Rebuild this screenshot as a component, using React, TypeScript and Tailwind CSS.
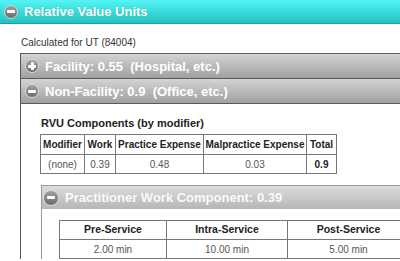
import React from "react";

function Icon({ plus = false, size = 14 }: { plus?: boolean; size?: number }) {
  return (
    <div
      className="relative shrink-0 rounded-full border border-[#d8d8d8] bg-gradient-to-b from-[#a0a0a0] to-[#6c6c6c] flex items-center justify-center"
      style={{ width: size, height: size }}
    >
      <div className="w-[8px] h-[3px] bg-white rounded-[1px]" />
      {plus && <div className="absolute w-[3px] h-[8px] bg-white rounded-[1px]" />}
    </div>
  );
}

export default function App() {
  const th2 = "h-[19px] flex items-center justify-center border-r border-b border-[#777] font-bold text-[#222] text-[10.5px]";
  const td2 = "h-[19px] flex items-center justify-center border-r border-b border-[#777] text-[#555] text-[10px]";
  return (
    <div className="w-[400px] h-[261px] overflow-hidden bg-white font-['Liberation_Sans',Arial,sans-serif]">
      <div className="w-[440px]">
        {/* Header */}
        <div className="h-[24px] flex items-center pl-[4px] bg-gradient-to-b from-[#52f4f4] to-[#22c2c2] border-b border-[#1e9e9e]">
          <Icon />
          <span className="ml-[6px] text-[13px] font-bold text-white leading-none [text-shadow:0_0_1px_rgba(0,120,120,0.4)]">
            Relative Value Units
          </span>
        </div>

        <div className="pl-[20px] pt-[13px]">
          <div className="text-[10px] leading-[12px] text-[#333] pl-[1px]">Calculated for UT (84004)</div>

          <div className="mt-[4px] border-l border-[#555]">
            {/* Facility bar */}
            <div className="h-[25px] flex items-center pl-[4px] border-t border-[#5a5a5a] bg-gradient-to-b from-[#d4d4d4] to-[#a0a0a0]">
              <Icon plus />
              <span className="ml-[6px] text-[13px] font-bold text-white leading-none whitespace-pre">
                Facility: 0.55  (Hospital, etc.)
              </span>
            </div>
            {/* Non-Facility bar */}
            <div className="h-[26px] flex items-center pl-[4px] border-t border-b border-[#5a5a5a] bg-gradient-to-b from-[#d4d4d4] to-[#a0a0a0]">
              <Icon />
              <span className="ml-[6px] text-[13px] font-bold text-white leading-none whitespace-pre">
                Non-Facility: 0.9  (Office, etc.)
              </span>
            </div>

            <div className="pl-[19px] pt-[13px]">
              <div className="text-[11px] leading-[13px] font-bold text-[#222] pl-[1px]">RVU Components (by modifier)</div>
              <table className="mt-[4px] table-fixed border-collapse w-[297px] text-[10px] text-center">
                <colgroup>
                  <col className="w-[44px]" />
                  <col className="w-[31px]" />
                  <col className="w-[88px]" />
                  <col className="w-[103px]" />
                  <col className="w-[30px]" />
                </colgroup>
                <thead>
                  <tr className="h-[20px]">
                    <th className="border border-[#777] font-bold text-[#222] p-0">Modifier</th>
                    <th className="border border-[#777] font-bold text-[#222] p-0">Work</th>
                    <th className="border border-[#777] font-bold text-[#222] p-0">Practice Expense</th>
                    <th className="border border-[#777] font-bold text-[#222] p-0">Malpractice Expense</th>
                    <th className="border border-[#777] font-bold text-[#222] p-0">Total</th>
                  </tr>
                </thead>
                <tbody>
                  <tr className="h-[19px]">
                    <td className="border border-[#777] text-[#555] p-0">(none)</td>
                    <td className="border border-[#777] text-[#555] p-0">0.39</td>
                    <td className="border border-[#777] text-[#555] p-0">0.48</td>
                    <td className="border border-[#777] text-[#555] p-0">0.03</td>
                    <td className="border border-[#777] text-[#222] font-bold p-0">0.9</td>
                  </tr>
                </tbody>
              </table>

              {/* Practitioner panel */}
              <div className="mt-[11px] ml-[1px] border-l border-[#999]">
                <div className="h-[24px] flex items-center pl-[1px] border-t border-[#9a9a9a] bg-gradient-to-b from-[#dcdcdc] to-[#b6b6b6]">
                  <Icon size={16} />
                  <span className="ml-[6px] text-[13px] font-bold text-[#fafafa] leading-none">
                    Practitioner Work Component: 0.39
                  </span>
                </div>
                <div className="pl-[17px] pt-[11px]">
                  <div className="grid grid-cols-[108px_121px_121px_40px] w-max border-t border-[#777]">
                    <div className={th2 + " border-l"}>Pre-Service</div>
                    <div className={th2}>Intra-Service</div>
                    <div className={th2 + " border-r-0"}>Post-Service</div>
                    <div className="h-[19px] border-b border-[#777]" />
                    <div className={td2 + " border-l"}>2.00 min</div>
                    <div className={td2}>10.00 min</div>
                    <div className={td2 + " border-r-0"}>5.00 min</div>
                    <div className="h-[19px] border-b border-[#777]" />
                  </div>
                </div>
              </div>
            </div>
          </div>
        </div>
      </div>
    </div>
  );
}
